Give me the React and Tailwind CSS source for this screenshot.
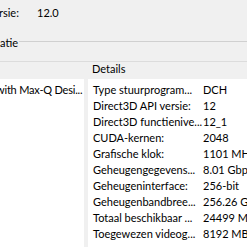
import React from 'react';

const rows = [
  ['Type stuurprogram...', 'DCH'],
  ['Direct3D API versie:', '12'],
  ['Direct3D functienive...', '12_1'],
  ['CUDA-kernen:', '2048'],
  ['Grafische klok:', '1101 MHz'],
  ['Geheugengegevens...', '8.01 Gbps'],
  ['Geheugeninterface:', '256-bit'],
  ['Geheugenbandbree...', '256.26 GB/s'],
  ['Totaal beschikbaar ...', '24499 MB'],
  ['Toegewezen videog...', '8192 MB'],
];

const App = () => {
  return (
    <div
      className="w-[247px] h-[247px] overflow-hidden bg-[#f0f0f0] text-black text-[11px] flex flex-col"
      style={{ fontFamily: 'Lato, "Liberation Sans", sans-serif' }}
    >
      {/* versie row */}
      <div className="h-[16px] mt-[5px] flex items-center leading-[16px] whitespace-nowrap">
        <span className="ml-[-1px] w-[38px]">rsie:</span>
        <span>12.0</span>
      </div>

      {/* group heading */}
      <div className="h-[16px] mt-[14px] flex items-center leading-[16px]">
        <span className="whitespace-nowrap pr-[1px]">atie</span>
        <div className="flex-1 h-[2px] border-t border-[#d0d0d0] border-b-white mt-[-2px]" />
      </div>

      {/* list header */}
      <div className="mt-[10px] border-t border-[#dcdcdc] h-[18px] flex items-start pt-[-0px]">
        <div className="w-[92px] shrink-0" />
        <span className="leading-[16px] mt-[-1px]">Details</span>
      </div>

      {/* panels */}
      <div className="flex-1 flex gap-[4px] min-h-0">
        <div className="w-[84px] bg-white pt-[3px] overflow-hidden shrink-0">
          <div className="h-[16px] leading-[16px] whitespace-nowrap ml-[-4px] tracking-[-0.2px]">with Max-Q Desi...</div>
        </div>
        <div className="flex-1 bg-white pt-[3px] pl-[5px] overflow-hidden">
          {rows.map(([label, value]) => (
            <div key={label} className="h-[16px] leading-[16px] flex whitespace-nowrap">
              <span className="w-[110px] shrink-0">{label}</span>
              <span>{value}</span>
            </div>
          ))}
        </div>
      </div>
    </div>
  );
};

export default App;
